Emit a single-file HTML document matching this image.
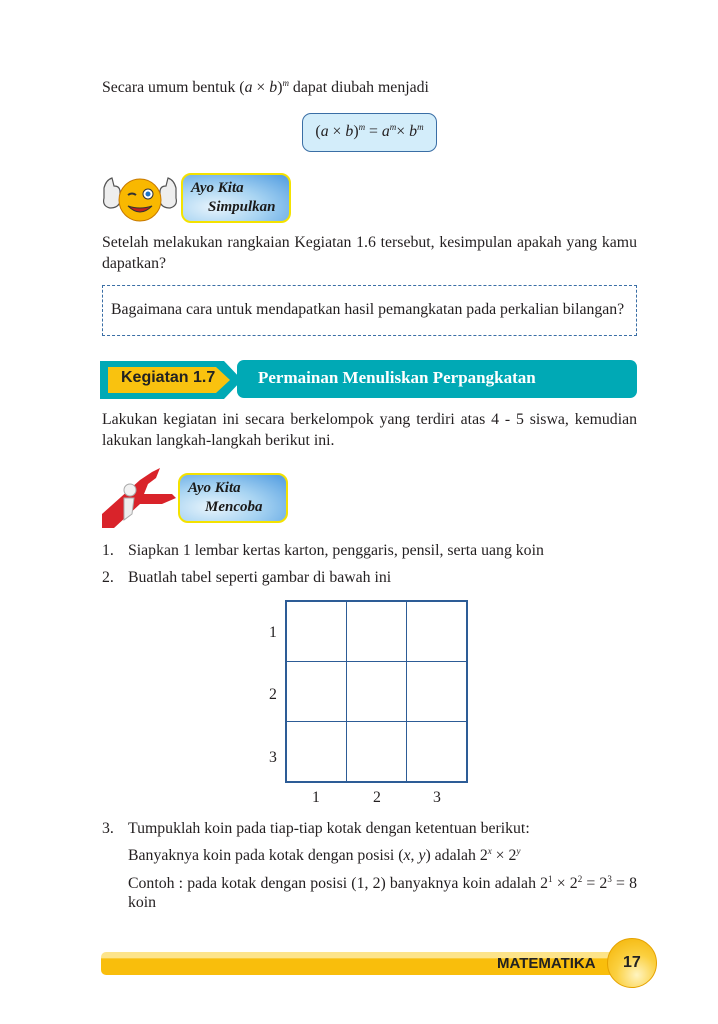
<!DOCTYPE html>
<html><head><style>
body{margin:0;width:718px;height:1024px;background:#fff;position:relative;overflow:hidden;font-family:"Liberation Serif",serif;font-size:15.8px;color:#231f20}
.a{position:absolute;white-space:nowrap}
.j{position:absolute;left:102px;width:535px;text-align:justify;text-align-last:justify;white-space:nowrap}
i{font-style:italic}
sup{font-size:9px;vertical-align:6px;line-height:0}
.ayo{position:absolute;border:2px solid #f4e200;border-radius:10px;background:radial-gradient(ellipse at 30% 70%,#e8f4fc 0%,#a8d4f2 45%,#4f9be0 100%);font-weight:bold;font-style:italic;font-size:15px;line-height:19px;box-sizing:border-box;padding:4px 0 0 8px;color:#1a1a1a}
td{border:1.5px solid #2d5c96;width:59px;height:59px;padding:0}
table{border-collapse:collapse;position:absolute;left:285px;top:600px;border:2px solid #2d5c96}
</style></head><body>
<div class="a" style="left:102px;top:79px">Secara umum bentuk (<i>a</i> × <i>b</i>)<sup><i>m</i></sup> dapat diubah menjadi</div>
<div class="a" style="left:302px;top:113px;width:135px;height:39px;box-sizing:border-box;border:1.5px solid #3a6ea5;border-radius:9px;background:#d3edfa;text-align:center;line-height:36px">(<i>a</i> × <i>b</i>)<sup><i>m</i></sup> = <i>a</i><sup><i>m</i></sup>× <i>b</i><sup><i>m</i></sup></div>

<svg class="a" style="left:100px;top:168px" width="80" height="60" viewBox="0 0 80 60">
<path d="M4 20 q2-8 8-10 l2 8 q6 0 6 6 v10 q-2 6-10 6 q-8-2-6-10z" fill="#eee" stroke="#555" stroke-width="1.2"/>
<path d="M76 20 q-2-8-8-10 l-2 8 q-6 0-6 6 v10 q2 6 10 6 q8-2 6-10z" fill="#eee" stroke="#555" stroke-width="1.2"/>
<circle cx="40" cy="32" r="21" fill="#f9b800" stroke="#c77800"/>
<circle cx="48" cy="26" r="5" fill="#fff" stroke="#333"/><circle cx="48" cy="26" r="2.5" fill="#1a73c7"/>
<path d="M28 27 q4-3 8 0" stroke="#333" stroke-width="2" fill="none"/>
<path d="M28 38 q12 12 24 0 q-12 4-24 0z" fill="#c0201d" stroke="#333"/>
</svg>
<div class="ayo" style="left:181px;top:173px;width:110px;height:50px">Ayo Kita<br><span style="padding-left:17px">Simpulkan</span></div>

<div class="j" style="top:234px">Setelah melakukan rangkaian Kegiatan 1.6 tersebut, kesimpulan apakah yang kamu</div>
<div class="a" style="left:102px;top:255px">dapatkan?</div>
<div class="a" style="left:102px;top:285px;width:535px;height:51px;box-sizing:border-box;border:1.5px dashed #3a6ea5;padding:15px 0 0 8px">Bagaimana cara untuk mendapatkan hasil pemangkatan pada perkalian bilangan?</div>

<svg class="a" style="left:100px;top:361px" width="145" height="38"><polygon points="0,0 124,0 142,19 124,38 0,38" fill="#00a9b5"/><polygon points="8,6 116,6 130,19 116,32 8,32" fill="#f9c20f"/></svg>
<div class="a" style="left:121px;top:369px;font-family:'Liberation Sans',sans-serif;font-weight:bold;font-size:16px;color:#222">Kegiatan 1.7</div>
<div class="a" style="left:237px;top:360px;width:400px;height:38px;background:#00a9b5;border-radius:7px"></div>
<div class="a" style="left:258px;top:368px;font-weight:bold;font-size:17px;color:#fff">Permainan Menuliskan Perpangkatan</div>

<div class="j" style="top:411px">Lakukan kegiatan ini secara berkelompok yang terdiri atas 4 - 5 siswa, kemudian</div>
<div class="a" style="left:102px;top:432px">lakukan langkah-langkah berikut ini.</div>

<svg class="a" style="left:100px;top:468px" width="78" height="62"><path d="M2 60 L2 46 L40 12 L52 4 L60 0 L56 10 L48 16 L44 26 L72 26 L76 30 L62 36 L40 36 L14 60Z" fill="#d9232a"/><circle cx="30" cy="22" r="6" fill="#f2f2f2" stroke="#aaa"/><path d="M24 30 l10 0 l-2 16 l-8 6z" fill="#eee" stroke="#aaa"/></svg>
<div class="ayo" style="left:178px;top:473px;width:110px;height:50px">Ayo Kita<br><span style="padding-left:17px">Mencoba</span></div>

<div class="a" style="left:102px;top:542px">1.</div><div class="a" style="left:128px;top:542px">Siapkan 1 lembar kertas karton, penggaris, pensil, serta uang koin</div>
<div class="a" style="left:102px;top:569px">2.</div><div class="a" style="left:128px;top:569px">Buatlah tabel seperti gambar di bawah ini</div>

<table><tr><td></td><td></td><td></td></tr><tr><td></td><td></td><td></td></tr><tr><td></td><td></td><td></td></tr></table>
<div class="a" style="left:269px;top:624px">1</div><div class="a" style="left:269px;top:686px">2</div><div class="a" style="left:269px;top:749px">3</div>
<div class="a" style="left:312px;top:789px">1</div><div class="a" style="left:373px;top:789px">2</div><div class="a" style="left:433px;top:789px">3</div>

<div class="a" style="left:102px;top:820px">3.</div><div class="a" style="left:128px;top:820px">Tumpuklah koin pada tiap-tiap kotak dengan ketentuan berikut:</div>
<div class="a" style="left:128px;top:847px">Banyaknya koin pada kotak dengan posisi (<i>x</i>, <i>y</i>) adalah 2<sup><i>x</i></sup> × 2<sup><i>y</i></sup></div>
<div class="a" style="left:128px;top:875px;width:509px;text-align:justify;text-align-last:justify">Contoh : pada kotak dengan posisi (1, 2) banyaknya koin adalah 2<sup>1</sup> × 2<sup>2</sup> = 2<sup>3</sup> = 8</div>
<div class="a" style="left:128px;top:894px">koin</div>

<div class="a" style="left:101px;top:952px;width:530px;height:23px;border-radius:5px;background:linear-gradient(#fde48a 0,#fde48a 25%,#f9be0c 30%,#f9be0c 100%)"></div>
<div class="a" style="left:497px;top:955px;font-family:'Liberation Sans',sans-serif;font-weight:bold;font-size:15px;color:#222">MATEMATIKA</div>
<div class="a" style="left:607px;top:938px;width:50px;height:50px;border-radius:50%;box-sizing:border-box;border:1.5px solid #e5a200;background:radial-gradient(circle at 60% 75%,#fff4c0 0%,#fbd040 45%,#f3b100 100%)"></div>
<div class="a" style="left:623px;top:954px;font-family:'Liberation Sans',sans-serif;font-weight:bold;font-size:16px;color:#222">17</div>
</body></html>
